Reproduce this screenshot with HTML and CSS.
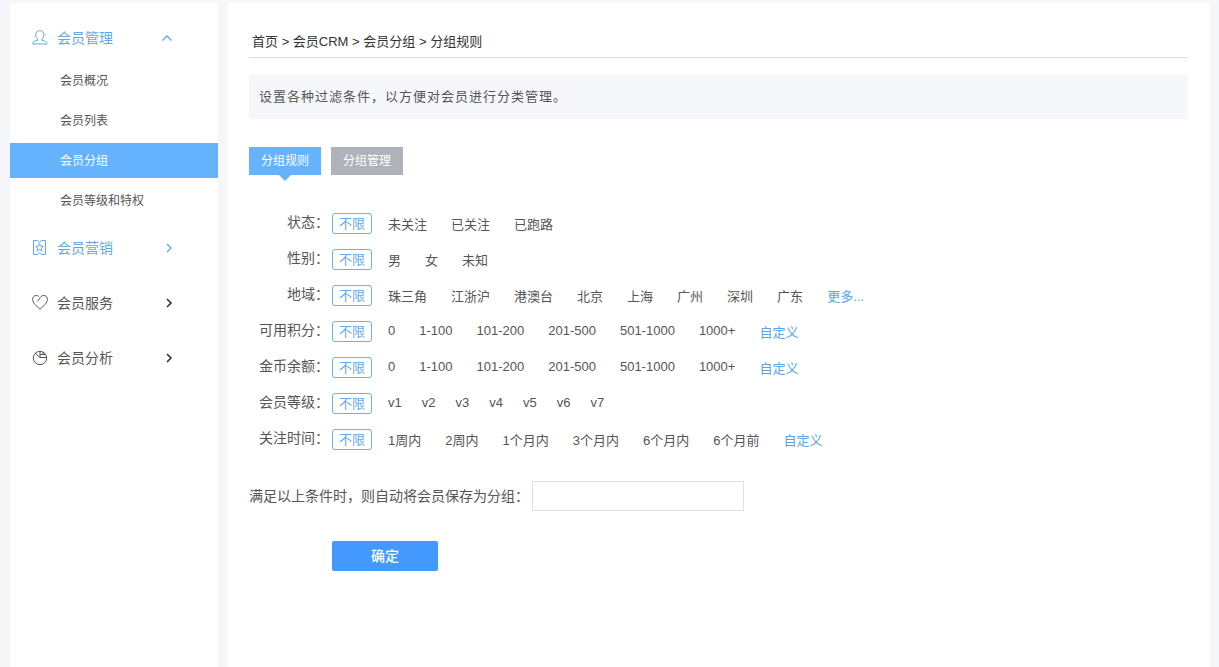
FILE: index.html
```html
<!DOCTYPE html>
<html lang="zh-CN">
<head>
<meta charset="utf-8">
<title>会员分组 - 分组规则</title>
<link rel="stylesheet" href="styles.css">
</head>
<body>
<div class="layout">
  <nav class="sidebar">
    <section>
      <button type="button" class="menu-head is-blue">
        <svg class="menu-icon" viewBox="0 0 16 16"><path d="M5.700 9C4.300 8.100 3.700 6.500 3.700 4.700C3.700 2.200 5.400 .6 7.800 .6S11.900 2.200 11.900 4.700C11.900 6.500 11.300 8.100 9.900 9V10.300C13 11 14.800 11.700 15 14H.6C.8 11.700 2.600 11 5.700 10.300Z"/></svg>
        <span>会员管理</span>
        <svg class="chevron" viewBox="0 0 12 12"><path d="M1.500 8.500 6 4 10.500 8.500"/></svg>
      </button>
      <div class="submenu">
        <a href="#">会员概况</a>
        <a href="#">会员列表</a>
        <a href="#" class="is-active">会员分组</a>
        <a href="#">会员等级和特权</a>
      </div>
    </section>
    <button type="button" class="menu-head is-blue">
      <svg class="menu-icon" viewBox="0 0 16 16"><path d="M1.500 .5H5.500L7.500 2.200 9.500 .5H13.500V14.500H9.500L7.500 12.800 5.500 14.500H1.500Z"/><path d="M7.500 3.600 8.600 6.200 11.300 6.400 9.200 8.200 9.900 11 7.500 9.500 5.100 11 5.800 8.200 3.700 6.400 6.400 6.200Z"/></svg>
      <span>会员营销</span>
      <svg class="chevron" viewBox="0 0 12 12"><path d="M6 2 10 6 6 10"/></svg>
    </button>
    <button type="button" class="menu-head">
      <svg class="menu-icon" viewBox="0 0 16 16"><path d="M5.500 6.400 8.300 2.500C9.300 1 10.300 .5 11.700 .5C14 .5 15.400 2.100 15.400 4.400C15.400 7.700 12 10.800 8 14.200C4 10.800 .6 7.700 .6 4.400C.6 2.100 2.200 .5 4.200 .5C5.400 .5 6.200 .8 6.900 1.500"/></svg>
      <span>会员服务</span>
      <svg class="chevron is-strong" viewBox="0 0 12 12"><path d="M6 2 10 6 6 10"/></svg>
    </button>
    <button type="button" class="menu-head">
      <svg class="menu-icon" viewBox="0 0 16 16"><circle cx="8" cy="8" r="6.700"/><path d="M3.300 3.300 8 7.500H14.600M8 7.500V1.300M8 4.500H13.400M11 1.900V4.500"/></svg>
      <span>会员分析</span>
      <svg class="chevron is-strong" viewBox="0 0 12 12"><path d="M6 2 10 6 6 10"/></svg>
    </button>
  </nav>

  <main class="content">
    <div class="breadcrumb"><a href="#">首页</a> &gt; <a href="#">会员CRM</a> &gt; <a href="#">会员分组</a> &gt; <span>分组规则</span></div>
    <p class="notice">设置各种过滤条件，以方便对会员进行分类管理。</p>
    <div class="tabs">
      <button type="button" class="tab is-active">分组规则</button>
      <button type="button" class="tab">分组管理</button>
    </div>
    <form>
      <div class="filters">
        <div class="filter">
          <span class="filter-name">状态：</span><a href="#" class="any">不限</a>
          <div class="options"><a href="#">未关注</a><a href="#">已关注</a><a href="#">已跑路</a></div>
        </div>
        <div class="filter">
          <span class="filter-name">性别：</span><a href="#" class="any">不限</a>
          <div class="options"><a href="#">男</a><a href="#">女</a><a href="#">未知</a></div>
        </div>
        <div class="filter">
          <span class="filter-name">地域：</span><a href="#" class="any">不限</a>
          <div class="options"><a href="#">珠三角</a><a href="#">江浙沪</a><a href="#">港澳台</a><a href="#">北京</a><a href="#">上海</a><a href="#">广州</a><a href="#">深圳</a><a href="#">广东</a><a href="#" class="more">更多...</a></div>
        </div>
        <div class="filter">
          <span class="filter-name">可用积分：</span><a href="#" class="any">不限</a>
          <div class="options numeric"><a href="#">0</a><a href="#">1-100</a><a href="#">101-200</a><a href="#">201-500</a><a href="#">501-1000</a><a href="#">1000+</a><a href="#" class="more">自定义</a></div>
        </div>
        <div class="filter">
          <span class="filter-name">金币余额：</span><a href="#" class="any">不限</a>
          <div class="options numeric"><a href="#">0</a><a href="#">1-100</a><a href="#">101-200</a><a href="#">201-500</a><a href="#">501-1000</a><a href="#">1000+</a><a href="#" class="more">自定义</a></div>
        </div>
        <div class="filter">
          <span class="filter-name">会员等级：</span><a href="#" class="any">不限</a>
          <div class="options numeric levels"><a href="#">v1</a><a href="#">v2</a><a href="#">v3</a><a href="#">v4</a><a href="#">v5</a><a href="#">v6</a><a href="#">v7</a></div>
        </div>
        <div class="filter">
          <span class="filter-name">关注时间：</span><a href="#" class="any">不限</a>
          <div class="options"><a href="#">1周内</a><a href="#">2周内</a><a href="#">1个月内</a><a href="#">3个月内</a><a href="#">6个月内</a><a href="#">6个月前</a><a href="#" class="more">自定义</a></div>
        </div>
      </div>
      <div class="save-row">
        <label for="group-name">满足以上条件时，则自动将会员保存为分组：</label>
        <input id="group-name" type="text">
      </div>
      <button type="submit" class="submit">确定</button>
    </form>
  </main>
</div>
</body>
</html>
```
FILE: styles.css
```css
* {
  box-sizing: border-box;
}

body {
  margin: 0;
  background: #f6f7fb;
  color: #555;
  font-family: "Liberation Sans", "Noto Sans CJK SC", sans-serif;
  font-size: 13px;
  line-height: 20px;
}

a {
  color: inherit;
  text-decoration: none;
}

button,
input {
  font: inherit;
}

button {
  border: 0;
  cursor: pointer;
}

.layout {
  display: flex;
  gap: 10px;
  min-height: 100vh;
  padding: 3px 9px 0 10px;
}

/* Sidebar */
.sidebar {
  display: flex;
  flex: 0 0 208px;
  flex-direction: column;
  gap: 5px;
  padding-top: 10px;
  background: #fff;
}

.menu-head {
  display: flex;
  align-items: center;
  gap: 9px;
  width: 100%;
  height: 50px;
  padding: 0 45px 0 22px;
  background: none;
  color: #555;
  font-size: 14px;
  text-align: left;
}

.menu-head.is-blue {
  color: #5fa9e6;
}

.menu-icon,
.chevron {
  fill: none;
  stroke: currentColor;
}

.menu-icon {
  width: 16px;
  height: 16px;
}

.chevron {
  width: 12px;
  height: 12px;
  margin-left: auto;
  stroke-width: 1.3;
}

.chevron.is-strong {
  color: #333;
  stroke-width: 1.6;
}

.submenu {
  display: flex;
  flex-direction: column;
  gap: 5px;
}

.submenu a {
  height: 35px;
  padding-left: 50px;
  font-size: 12px;
  line-height: 37px;
}

.submenu .is-active {
  background: #65b3ff;
  color: #fff;
}

/* Content */
.content {
  flex: 1;
  min-width: 0;
  padding: 29px 22px 40px 21px;
  background: #fff;
}

.breadcrumb {
  padding: 0 3px 5px;
  border-bottom: 1px solid #dcdfe3;
  color: #333;
}

.notice {
  margin: 17px 0 28px;
  padding: 12px 10px;
  background: #f6f7fb;
  letter-spacing: 1px;
}

.tabs {
  display: flex;
  gap: 10px;
}

.tab {
  position: relative;
  width: 72px;
  height: 28px;
  padding: 0;
  background: #aeb3b9;
  color: #fff;
  font-size: 12px;
}

.tab.is-active {
  background: #65b3ff;
}

.tab.is-active::after {
  position: absolute;
  top: 100%;
  left: 30px;
  border: 6px solid transparent;
  border-top-color: #65b3ff;
  border-bottom: 0;
  content: "";
}

.filters {
  display: flex;
  flex-direction: column;
  gap: 12px;
  margin-top: 38px;
}

.filter {
  display: flex;
  align-items: flex-start;
  min-height: 24px;
}

.filter-name {
  width: 80px;
  margin-right: 3px;
  font-size: 14px;
  line-height: 18px;
  text-align: right;
}

.any {
  width: 40px;
  height: 21px;
  border: 1px solid #6db3e2;
  border-radius: 3px;
  color: #65a9e6;
  line-height: 20px;
  text-align: center;
}

.options {
  display: flex;
  flex-wrap: wrap;
  gap: 0 24px;
  margin-left: 16px;
  line-height: 23px;
}

.numeric {
  line-height: 20px;
}

.levels {
  gap: 0 20px;
}

.more {
  color: #55a5ea;
  line-height: 23px;
}

.save-row {
  display: flex;
  align-items: center;
  gap: 3px;
  margin-top: 28px;
  font-size: 14px;
}

.save-row input {
  width: 212px;
  height: 30px;
  padding: 0 8px;
  border: 1px solid #dfe1e4;
}

.submit {
  width: 106px;
  height: 30px;
  margin: 30px 0 0 83px;
  border-radius: 2px;
  background: #4499ff;
  color: #fff;
  font-size: 14px;
  font-weight: 500;
}
```
